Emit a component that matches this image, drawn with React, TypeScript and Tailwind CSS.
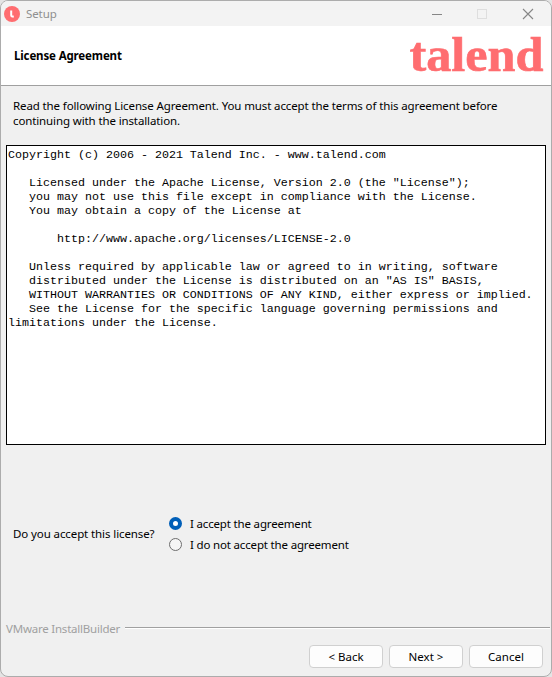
import { useState } from "react";

const LICENSE = `Copyright (c) 2006 - 2021 Talend Inc. - www.talend.com

   Licensed under the Apache License, Version 2.0 (the "License");
   you may not use this file except in compliance with the License.
   You may obtain a copy of the License at

       http://www.apache.org/licenses/LICENSE-2.0

   Unless required by applicable law or agreed to in writing, software
   distributed under the License is distributed on an "AS IS" BASIS,
   WITHOUT WARRANTIES OR CONDITIONS OF ANY KIND, either express or implied.
   See the License for the specific language governing permissions and
limitations under the License.`;

function TitleBar() {
  return (
    <div className="flex h-[25px] shrink-0 items-center bg-[#f3f3f3] pl-[3px] text-[#8f8f8f]">
      <svg width="16" height="16" viewBox="0 0 16 16">
        <circle cx="8" cy="8" r="8" fill="#ff6d70" />
        <path d="M7.2 4.5V9.2Q7.2 10.9 9.8 10.5" fill="none" stroke="#fff" strokeWidth="2" />
      </svg>
      <span className="ml-[6px] text-[11.5px] leading-[16px] tracking-[-0.1px]">Setup</span>
      <svg className="ml-auto mr-[11px]" width="110" height="14" viewBox="0 0 110 14" fill="none">
        <path d="M2 7.5h10" stroke="#868686" />
        <rect x="47.5" y="2.5" width="9" height="9" stroke="#dedede" />
        <path d="M93 2l10 10M103 2L93 12" stroke="#868686" strokeWidth="1.1" />
      </svg>
    </div>
  );
}

function Radio({ label, checked, onSelect }: { label: string; checked: boolean; onSelect: () => void }) {
  return (
    <label className="relative flex h-[21px] items-center">
      <input type="radio" className="sr-only" checked={checked} onChange={onSelect} />
      <span
        className={
          checked
            ? "size-[13px] rounded-full border-4 border-[#005fb8] bg-white"
            : "size-[13px] rounded-full border border-[#6e6e6e] bg-[#f5f5f5]"
        }
      />
      <span className="ml-[8px] tracking-[-0.17px]">{label}</span>
    </label>
  );
}

function Button({ label }: { label: string }) {
  return (
    <button className="h-[23px] w-[74px] rounded-[4px] border border-[#d0d0d0] bg-[#fdfdfd] leading-[21px]">
      {label}
    </button>
  );
}

export default function App() {
  const [accepted, setAccepted] = useState(true);
  return (
    <div className="h-[677px] w-[552px] bg-[#e4e4e4] font-['Noto_Sans',sans-serif] text-[11.5px] leading-[15px] text-black">
      <div className="flex h-full w-full flex-col overflow-hidden rounded-[8px] border border-[#acacac] bg-[#f0f0f0]">
        <TitleBar />
        <header className="flex h-[60px] shrink-0 items-center justify-between border-b border-[#a0a0a0] bg-white pl-[13px]">
          <h1 className="mb-px font-bold leading-[15px] tracking-[-0.14px]">License Agreement</h1>
          <svg width="142" height="59" viewBox="0 0 142 59">
            <text
              x="0.5"
              y="45"
              textLength="134"
              lengthAdjust="spacingAndGlyphs"
              strokeWidth="0.6"
              className="fill-[#ff6d70] stroke-[#ff6d70] font-['Liberation_Serif',serif] text-[48px] font-bold leading-[48px]"
            >
              talend
            </text>
          </svg>
        </header>
        <p className="mt-[12px] h-[30px] shrink-0 whitespace-nowrap pl-[12px] tracking-[-0.12px]">
          Read the following License Agreement. You must accept the terms of this agreement before
          <br />
          continuing with the installation.
        </p>
        <pre className="ml-[5px] mt-[17px] h-[300px] w-[540px] shrink-0 border border-black bg-white pl-px pt-[2px] font-['Liberation_Mono',monospace] text-[11.665px] leading-[14px]">
          {LICENSE}
        </pre>
        <div className="mt-[68px] flex shrink-0 items-center pl-[12px]">
          <span className="mb-px w-[156px] tracking-[-0.1px]">Do you accept this license?</span>
          <div>
            <Radio label="I accept the agreement" checked={accepted} onSelect={() => setAccepted(true)} />
            <Radio label="I do not accept the agreement" checked={!accepted} onSelect={() => setAccepted(false)} />
          </div>
        </div>
        <div className="mt-[66px] flex h-[16px] shrink-0 pl-[5px] text-[#a0a0a0]">
          <span className="w-[119px] whitespace-nowrap tracking-[-0.22px]">VMware InstallBuilder</span>
          <span className="mr-px mt-[6px] h-[2px] flex-1 border-b border-t border-b-white border-t-[#a0a0a0]" />
        </div>
        <footer className="mt-[8px] flex justify-end gap-[6px] pr-[8px]">
          <Button label="< Back" />
          <Button label="Next >" />
          <Button label="Cancel" />
        </footer>
      </div>
    </div>
  );
}
